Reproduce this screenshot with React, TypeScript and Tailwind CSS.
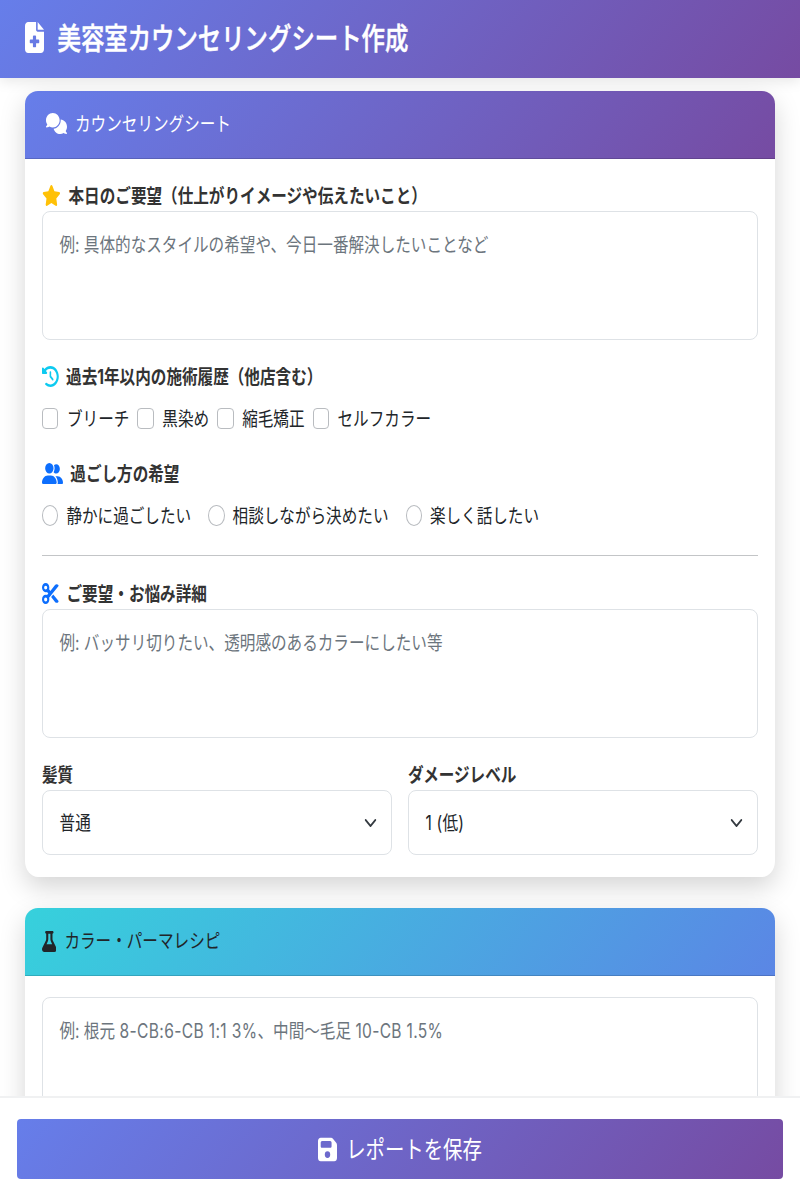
import type { ReactNode } from 'react'
import type { IconType } from 'react-icons'
import {
  FaClockRotateLeft,
  FaComments,
  FaFileMedical,
  FaFlask,
  FaFloppyDisk,
  FaScissors,
  FaStar,
  FaUserGroup,
} from 'react-icons/fa6'

const historyOptions = ['ブリーチ', '黒染め', '縮毛矯正', 'セルフカラー']
const stayOptions = ['静かに過ごしたい', '相談しながら決めたい', '楽しく話したい']

// Tall, condensed text
function Tall({ children, className = '' }: { children: ReactNode; className?: string }) {
  return <span className={`inline-block scale-y-125 whitespace-nowrap ${className}`}>{children}</span>
}

function Icon({ as: Glyph, className }: { as: IconType; className: string }) {
  return <Glyph preserveAspectRatio="none" className={`shrink-0 ${className}`} />
}

function FieldLabel({ icon, children }: { icon?: ReactNode; children: ReactNode }) {
  return (
    <div className="flex h-[31px] items-center font-bold text-[#333]">
      {icon}
      <Tall className="mt-[2px]">{children}</Tall>
    </div>
  )
}

function TextBox({ children }: { children: ReactNode }) {
  return (
    <div className="h-[129px] rounded-lg border border-[#dee2e6] bg-white px-[16.4px] pt-[22px] text-[#6c757d]">
      <Tall>{children}</Tall>
    </div>
  )
}

function SelectBox({ label, value }: { label: string; value: string }) {
  return (
    <div className="flex-1">
      <FieldLabel>{label}</FieldLabel>
      <div className="flex h-[65px] items-center justify-between rounded-lg border border-[#dee2e6] bg-white pr-[14px] pl-[16.4px]">
        <Tall className="mt-[2px] tracking-[0.2px]">{value}</Tall>
        <svg viewBox="0 0 16 16" preserveAspectRatio="none" fill="none" className="h-[16px] w-[13px]">
          <path d="m2 5 6 6 6-6" stroke="#343a40" strokeWidth="2" strokeLinecap="round" strokeLinejoin="round" />
        </svg>
      </div>
    </div>
  )
}

export default function App() {
  return (
    <div className="flex h-[1200px] w-[800px] flex-col overflow-hidden bg-white font-[Inter,'Noto_Sans_CJK_JP',sans-serif] text-[15.6px] leading-[24px] text-[#212529]">
      <header className="z-10 flex h-[78px] shrink-0 items-center bg-[linear-gradient(129deg,#667eea_0%,#764ba2_100%)] pl-[25px] text-white shadow-[0_3px_13px_rgba(0,0,0,0.1)]">
        <Icon as={FaFileMedical} className="mb-[4px] h-[31px] w-[19px]" />
        <h1 className="ml-[13.5px] text-[23.4px] leading-[30px] font-medium [-webkit-text-stroke:0.4px_white]">
          <Tall>美容室カウンセリングシート作成</Tall>
        </h1>
      </header>

      <main className="min-h-0 flex-1 overflow-hidden px-[25px] pt-[13px]">
        {/* カウンセリングシート */}
        <section className="h-[786px] rounded-[13px/16px] bg-white shadow-[0_10px_26px_rgba(0,0,0,0.17)]">
          <div className="flex h-[68px] items-center rounded-t-[13px] border-b border-black/15 bg-[linear-gradient(129deg,#667eea_0%,#764ba2_100%)] bg-origin-border pl-[21px] text-white">
            <Icon as={FaComments} className="mb-[2px] h-[21px] w-[21px]" />
            <Tall className="ml-[8px]">カウンセリングシート</Tall>
          </div>

          <div className="px-[17px] pt-[21px]">
            <FieldLabel icon={<Icon as={FaStar} className="mr-[8px] -ml-[0.3px] h-[21px] w-[18.8px] text-[#ffc107]" />}>
              本日のご要望（仕上がりイメージや伝えたいこと）
            </FieldLabel>
            <TextBox>例: 具体的なスタイルの希望や、今日一番解決したいことなど</TextBox>

            <div className="mt-[21px]">
              <FieldLabel icon={<Icon as={FaClockRotateLeft} className="mr-[7.6px] -ml-[0.3px] h-[21px] w-[16.8px] text-[#0dcaf0]" />}>
                過去1年以内の施術履歴（他店含む）
              </FieldLabel>
            </div>
            <div className="mt-[11px] flex h-[31px] items-center gap-[8px]">
              {historyOptions.map((option) => (
                <label key={option} className="flex items-center gap-[8.6px]">
                  <span className="h-[21px] w-[16.4px] rounded-[4px] border border-[#b9bcc0] bg-white" />
                  <Tall className="mt-[2px]">{option}</Tall>
                </label>
              ))}
            </div>

            <div className="mt-[24px]">
              <FieldLabel icon={<Icon as={FaUserGroup} className="mr-[7.6px] -ml-[0.3px] h-[21px] w-[21px] text-[#0d6efd]" />}>
                過ごし方の希望
              </FieldLabel>
            </div>
            <div className="mt-[11px] flex h-[31px] items-center gap-[17px]">
              {stayOptions.map((option) => (
                <label key={option} className="flex items-center gap-[8px]">
                  <span className="h-[21px] w-[16.4px] rounded-[50%] border border-[#b9bcc0] bg-white" />
                  <Tall className="mt-[2px]">{option}</Tall>
                </label>
              ))}
            </div>

            <hr className="mt-[24px] border-[#c3c5c7]" />

            <div className="mt-[22px]">
              <FieldLabel icon={<Icon as={FaScissors} className="mr-[8px] -ml-[0.3px] h-[21px] w-[16.8px] text-[#0d6efd]" />}>
                ご要望・お悩み詳細
              </FieldLabel>
            </div>
            <TextBox>例: バッサリ切りたい、透明感のあるカラーにしたい等</TextBox>

            <div className="mt-[21px] flex gap-[16px]">
              <SelectBox label="髪質" value="普通" />
              <SelectBox label="ダメージレベル" value="1 (低)" />
            </div>
          </div>
        </section>

        {/* カラー・パーマレシピ */}
        <section className="mt-[31px] h-[400px] rounded-[13px/16px] bg-white shadow-[0_10px_26px_rgba(0,0,0,0.17)]">
          <div className="flex h-[68px] items-center rounded-t-[13px] border-b border-black/15 bg-[linear-gradient(129deg,#36d1dc_0%,#5b86e5_100%)] bg-origin-border pl-[16.7px]">
            <Icon as={FaFlask} className="mb-[1px] h-[21px] w-[14.7px]" />
            <Tall className="mt-[1px] ml-[8px]">カラー・パーマレシピ</Tall>
          </div>
          <div className="px-[17px] pt-[21px]">
            <TextBox>
              例: 根元 <span className="tracking-[0.36px]">8-CB:6-CB 1:1 3%</span>、中間〜毛足{' '}
              <span className="tracking-[0.3px]">10-CB 1.5%</span>
            </TextBox>
          </div>
        </section>
      </main>

      <footer className="z-10 h-[104px] shrink-0 border-t-2 border-[#f0f1f2] bg-white px-[17px] pt-[21px]">
        <button className="flex h-[60px] w-full items-center justify-center rounded-[4px] bg-[linear-gradient(129deg,#667eea_0%,#764ba2_100%)] text-[19.4px] text-white">
          <Icon as={FaFloppyDisk} className="h-[27px] w-[19px]" />
          <Tall className="ml-[9px]">レポートを保存</Tall>
        </button>
      </footer>
    </div>
  )
}
